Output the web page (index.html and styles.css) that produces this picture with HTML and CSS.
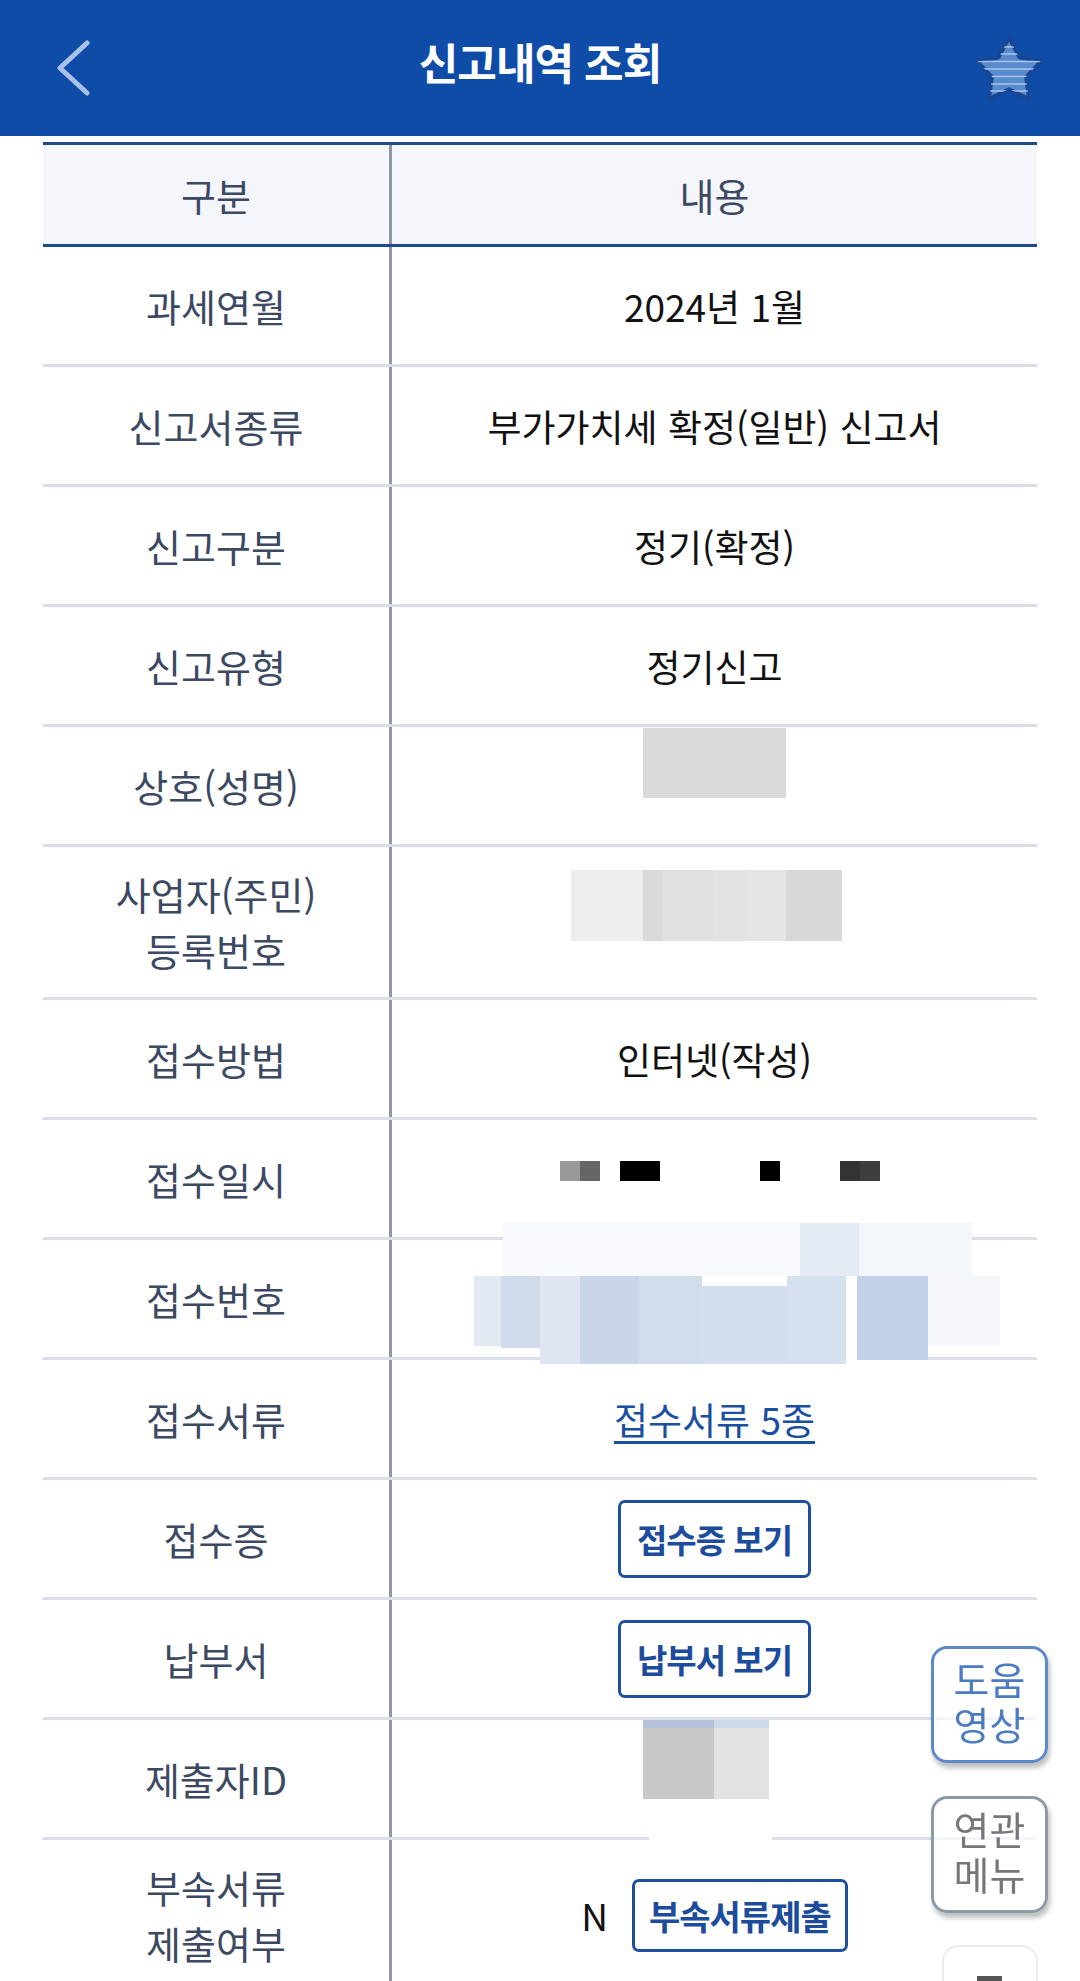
FILE: index.html
```html
<!DOCTYPE html>
<html lang="ko">
<head>
    <meta charset="UTF-8">
    <title>신고내역 조회</title>
    <link rel="stylesheet" href="styles.css">
</head>
<body>
<header class="topbar">
    <a class="back">
        <svg width="36" height="56" viewBox="0 0 36 56">
            <polyline points="32,3 5,28 32,53" fill="none" stroke="#a9c1ea" stroke-width="5" stroke-linejoin="round" stroke-linecap="round"/>
        </svg>
    </a>
    <h1 class="title">신고내역 조회</h1>
    <span class="fav">
        <svg width="70" height="68" viewBox="0 0 70 68">
            <defs>
                <clipPath id="starClip">
                    <path d="M35 4 L45.3 23.7 L66.7 27.4 L51.8 43 L54.8 64.6 L35 55 L15.2 64.6 L18.2 43 L3.3 27.4 L24.7 23.7 Z"/>
                </clipPath>
            </defs>
            <path d="M35 4 L45.3 23.7 L66.7 27.4 L51.8 43 L54.8 64.6 L35 55 L15.2 64.6 L18.2 43 L3.3 27.4 L24.7 23.7 Z" fill="#5a8ace" stroke="#1a4690" stroke-width="3.5" stroke-linejoin="round"/>
            <g clip-path="url(#starClip)" stroke="#a8c4ea" stroke-width="1.5">
                <line x1="0" y1="13" x2="70" y2="13"/>
                <line x1="0" y1="20" x2="70" y2="20"/>
                <line x1="0" y1="27.5" x2="70" y2="27.5"/>
                <line x1="0" y1="35" x2="70" y2="35"/>
                <line x1="0" y1="42.5" x2="70" y2="42.5"/>
                <line x1="0" y1="50" x2="70" y2="50"/>
                <line x1="0" y1="57" x2="70" y2="57"/>
            </g>
        </svg>
    </span>
</header>

<div class="report">
    <div class="row head">
        <div class="label">구분</div>
        <div class="value">내용</div>
    </div>
    <div class="row">
        <div class="label">과세연월</div>
        <div class="value">2024년 1월</div>
    </div>
    <div class="row">
        <div class="label">신고서종류</div>
        <div class="value">부가가치세 확정(일반) 신고서</div>
    </div>
    <div class="row">
        <div class="label">신고구분</div>
        <div class="value">정기(확정)</div>
    </div>
    <div class="row">
        <div class="label">신고유형</div>
        <div class="value">정기신고</div>
    </div>
    <div class="row">
        <div class="label">상호(성명)</div>
        <div class="value top">
            <div class="mask name"></div>
        </div>
    </div>
    <div class="row tall">
        <div class="label">사업자(주민)<br>등록번호</div>
        <div class="value top">
            <div class="mask bizno">
                <span class="m1"></span><span class="m2"></span><span class="m3"></span><span class="m4"></span><span class="m5"></span><span class="m6"></span>
            </div>
        </div>
    </div>
    <div class="row">
        <div class="label">접수방법</div>
        <div class="value">인터넷(작성)</div>
    </div>
    <div class="row">
        <div class="label">접수일시</div>
        <div class="value left">
            <div class="mask date">
                <span class="d1"></span><span class="d2"></span>
                <span class="d3"></span>
                <span class="d4"></span>
                <span class="d5"></span><span class="d6"></span>
            </div>
        </div>
    </div>
    <div class="row">
        <div class="label">접수번호</div>
        <div class="value">
            <div class="blob">
                <div class="blob_top">
                    <span class="t1"></span><span class="t2"></span><span class="t3"></span>
                </div>
                <div class="blob_main">
                    <span class="b1"></span><span class="b2"></span><span class="b3"></span><span class="b4"></span><span class="b5"></span><span class="b6"></span><span class="b7"></span><span class="b8"></span><span class="b9"></span><span class="b10"></span>
                </div>
            </div>
        </div>
    </div>
    <div class="row">
        <div class="label">접수서류</div>
        <div class="value"><a class="doc_link">접수서류 5종</a></div>
    </div>
    <div class="row">
        <div class="label">접수증</div>
        <div class="value"><button class="btn view">접수증 보기</button></div>
    </div>
    <div class="row">
        <div class="label">납부서</div>
        <div class="value"><button class="btn view">납부서 보기</button></div>
    </div>
    <div class="row">
        <div class="label">제출자ID</div>
        <div class="value">
            <div class="id_mask">
                <span class="i1"></span><span class="i2"></span>
            </div>
            <div class="id_gap"></div>
        </div>
    </div>
    <div class="row tall">
        <div class="label">부속서류<br>제출여부</div>
        <div class="value">
            <span class="yn">N</span>
            <button class="btn">부속서류제출</button>
        </div>
    </div>
</div>

<div class="float_menu">
    <div class="float_btn help">도움<br>영상</div>
    <div class="float_btn related">연관<br>메뉴</div>
    <div class="float_btn totop"><span class="bar"></span></div>
</div>
</body>
</html>
```

FILE: styles.css
```css
body{
    margin: 0;
    background-color: #fff;
    font-family: "Noto Sans CJK KR", "Noto Sans", sans-serif;
}
.topbar{
    display: grid;
    grid-template-columns: 1fr auto 1fr;
    align-items: center;
    height: 136px;
    background-color: #0e4ca8;
}
.back{
    justify-self: start;
    margin-left: 55px;
    display: flex;
}
.title{
    margin: 0 0 14px 0;
    color: #fff;
    font-size: 43px;
    font-weight: 700;
    letter-spacing: -1px;
}
.fav{
    justify-self: end;
    margin-right: 36px;
    display: flex;
}

.report{
    margin: 6px 43px 0;
    border-top: 3px solid #1e4b8c;
}
.row{
    display: grid;
    grid-template-columns: 346px 1fr;
    min-height: 117px;
    border-bottom: 3px solid #d9dee7;
}
.row.head{
    min-height: 99px;
    background-color: #f4f6fb;
    border-bottom: 3px solid #1e4b8c;
}
.row.tall{
    min-height: 150px;
}
.label, .value{
    display: flex;
    align-items: center;
    justify-content: center;
    text-align: center;
    line-height: 56px;
}
.label{
    color: #3b4962;
    font-size: 38px;
}
.value{
    position: relative;
    color: #111;
    font-size: 37px;
    border-left: 3px solid #8d97a8;
}
.head .value{
    color: #3b4962;
    font-size: 38px;
}
.value.top{
    align-items: flex-start;
}
.value.left{
    justify-content: flex-start;
}

/* blurred-out values */
.mask.name{
    margin-top: 1px;
    width: 143px;
    height: 70px;
    background-color: #d9d9d9;
}
.mask.bizno{
    display: flex;
    margin: 23px 16px 0 0;
    height: 71px;
}
.mask.bizno span{ display: block; height: 100%; }
.m1{ width: 72px; background-color: #eeeeee; }
.m2{ width: 19px; background-color: #d9d9d9; }
.m3{ width: 51px; background-color: #e0e0e0; }
.m4{ width: 34px; background-color: #e2e2e2; }
.m5{ width: 39px; background-color: #e6e6e6; }
.m6{ width: 56px; background-color: #d8d8d8; }

.mask.date{
    display: flex;
    margin: 0 0 16px 168px;
    height: 20px;
}
.mask.date span{ display: block; height: 20px; width: 20px; }
.d1{ background-color: #999; }
.d2{ background-color: #666; }
.d3{ background-color: #000; width: 40px !important; margin-left: 20px; }
.d4{ background-color: #000; margin-left: 100px; }
.d5{ background-color: #333; margin-left: 60px; }
.d6{ background-color: #3d3d3d; }

.blob{
    position: absolute;
    left: 82px;
    top: -17px;
    width: 526px;
    height: 141px;
}
.blob_top{
    display: flex;
    margin-left: 29px;
    height: 53px;
}
.blob_top span{ display: block; }
.t1{ width: 297px; background-color: #f7f9fc; }
.t2{ width: 59px; background-color: #e4eaf3; }
.t3{ width: 113px; background-color: #f3f6fa; }
.blob_main{
    display: flex;
    align-items: flex-start;
    height: 88px;
}
.blob_main span{ display: block; height: 100%; }
.b1{ width: 27px; height: 70px !important; background-color: #e3e9f3; }
.b2{ width: 39px; height: 72px !important; background-color: #d0dcec; }
.b3{ width: 40px; background-color: #dfe6f1; }
.b4{ width: 59px; background-color: #c9d6e9; }
.b5{ width: 63px; background-color: #d2ddec; }
.b6{ width: 85px; background-color: #d4dfee; border-top: 10px solid #fff; box-sizing: border-box; }
.b7{ width: 59px; background-color: #d5dfee; }
.b8{ width: 11px; background-color: #fff; }
.b9{ width: 71px; height: 84px !important; background-color: #c2d0e8; }
.b10{ width: 72px; height: 70px !important; background-color: #f4f6fa; }

.id_mask{
    position: absolute;
    left: 251px;
    top: 0;
    display: flex;
    height: 79px;
}
.id_mask span{ display: block; height: 100%; }
.i1{ width: 71px; background-color: #c8c8c8; border-top: 8px solid #b3c2d9; box-sizing: border-box; }
.i2{ width: 55px; background-color: #e2e2e2; border-top: 8px solid #cdd8e8; box-sizing: border-box; }
.id_gap{
    position: absolute;
    left: 257px;
    top: 117px;
    width: 123px;
    height: 3px;
    background-color: #fff;
}

.doc_link{
    color: #1a4ea1;
    text-decoration: underline;
    text-decoration-thickness: 3px;
    text-underline-offset: 6px;
}
.btn{
    display: inline-flex;
    align-items: center;
    justify-content: center;
    box-sizing: border-box;
    height: 73px;
    padding: 0 14px;
    background-color: #fff;
    border: 3px solid #1e4f9c;
    border-radius: 7px;
    color: #1c4c9b;
    font-family: "Noto Sans CJK KR", "Noto Sans", sans-serif;
    font-size: 34px;
    font-weight: 700;
    letter-spacing: -1px;
}
.btn.view{
    width: 193px;
    height: 78px;
    font-size: 33px;
}
.yn{
    margin-right: 24px;
}

.float_menu{
    position: fixed;
    left: 931px;
    top: 1646px;
    display: flex;
    flex-direction: column;
    align-items: center;
    gap: 33px;
}
.float_btn{
    box-sizing: border-box;
    width: 117px;
    height: 117px;
    display: flex;
    align-items: center;
    justify-content: center;
    text-align: center;
    font-family: Roboto, "Noto Sans CJK KR", sans-serif;
    font-size: 39px;
    line-height: 45px;
    border-radius: 16px;
    background-color: rgba(255,255,255,0.7);
    box-shadow: 2px 5px 5px rgba(0,0,0,0.25);
}
.help{
    color: #4b7bc0;
    border: 3px solid #5d89c8;
}
.related{
    color: #777;
    border: 3px solid #8e99a8;
}
.totop{
    width: 96px;
    align-items: flex-start;
    border: 2px solid #ececec;
    box-shadow: none;
    background-color: #fff;
    margin-top: -1px;
}
.bar{
    margin-top: 29px;
    width: 25px;
    height: 6px;
    background-color: #555;
}
```
